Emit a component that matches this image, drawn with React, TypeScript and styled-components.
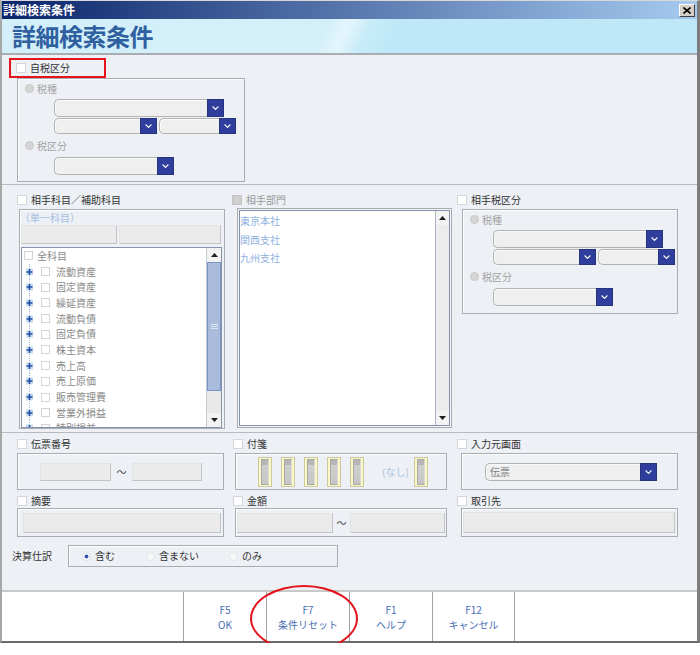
import React from 'react';
import styled, { createGlobalStyle } from 'styled-components';

const GlobalStyle = createGlobalStyle`
  * { box-sizing: border-box; }
  html, body { margin: 0; padding: 0; background: #ffffff; }
  body {
    font-family: "Noto Sans CJK JP", "Noto Sans", sans-serif;
    font-size: 10px;
    line-height: 1.2;
    color: #333333;
  }
`;

const Window = styled.div`
  position: relative;
  width: 700px;
  height: 643px;
  display: flex;
  flex-direction: column;
  border-top: 1px solid #d8d8d8;
  border-left: 2px solid #a7a7a7;
  border-right: 3px solid #7d7d7d;
  border-bottom: 2px solid #6b6b6b;
  background: #edf0f5;
`;

const TitleBar = styled.div`
  height: 18px;
  flex: none;
  display: flex;
  align-items: center;
  justify-content: space-between;
  padding: 0 2px 0 1px;
  background: linear-gradient(to right, #0a246a, #a6caf0);
  color: #ffffff;
  font-size: 12px;
  font-weight: 700;
`;

const CloseButton = styled.div`
  width: 16px;
  height: 13px;
  background: #d4d0c8;
  border: 1px solid;
  border-color: #ffffff #404040 #404040 #ffffff;
  display: flex;
  align-items: center;
  justify-content: center;
`;

const Header = styled.div`
  height: 36px;
  flex: none;
  display: flex;
  align-items: center;
  padding-left: 10px;
  background: linear-gradient(118deg, #d3effa 0%, #d3effa 46%, #e4f6fc 49%, #c9ecf9 52%, #bee8f7 56%, #bee8f7 100%);
  border-bottom: 2px solid #a9adb2;
`;

const HeaderTitle = styled.h1`
  margin: 0;
  font-size: 24px;
  font-weight: 700;
  color: #2f60a0;
  line-height: 1;
  letter-spacing: -0.5px;
`;

const Body = styled.div`
  flex: 1;
  display: flex;
  flex-direction: column;
  min-height: 0;
`;

const TopSection = styled.section`
  height: 130px;
  flex: none;
  padding: 3px 0 0 7px;
  display: flex;
  flex-direction: column;
  align-items: flex-start;
  border-bottom: 1px solid #b5b9c0;
`;

const Highlight = styled.div`
  width: 97px;
  height: 20px;
  border: 2px solid #e3141b;
  padding-left: 5px;
  display: flex;
  align-items: center;
`;

const CheckLabel = styled.label<{ $muted?: boolean; $ml?: number }>`
  display: flex;
  align-items: center;
  gap: 4px;
  height: 12px;
  margin-left: ${p => p.$ml ?? 0}px;
  color: ${p => (p.$muted ? '#9a9a9a' : '#333333')};
  white-space: nowrap;
`;

const CheckBox = styled.span<{ $disabled?: boolean; $size?: number }>`
  width: ${p => p.$size ?? 10}px;
  height: ${p => p.$size ?? 10}px;
  flex: none;
  background: ${p => (p.$disabled ? '#cfcfcf' : '#ffffff')};
  border: 1px solid ${p => (p.$disabled ? '#c4c4c4' : '#d3d6db')};
`;

const GroupBox = styled.div<{ $ml?: number; $mt?: number; $w: number; $h: number; $pl?: number }>`
  margin-left: ${p => p.$ml ?? 0}px;
  margin-top: ${p => p.$mt ?? 0}px;
  width: ${p => p.$w}px;
  height: ${p => p.$h}px;
  padding-left: ${p => p.$pl ?? 0}px;
  flex: none;
  border: 1px solid #a8acb3;
  box-shadow: inset 1px 1px 0 #fdfdfd;
`;

const TaxBox = styled(GroupBox)`
  padding-top: 4px;
  display: flex;
  flex-direction: column;
  align-items: flex-start;
`;

const RadioLabel = styled.div<{ $mt?: number }>`
  display: flex;
  align-items: center;
  gap: 3px;
  height: 11px;
  margin-top: ${p => p.$mt ?? 0}px;
  color: #a4a4a4;
`;

const Radio = styled.span<{ $state: 'disabled' | 'on' | 'off' }>`
  width: 9px;
  height: 9px;
  flex: none;
  border-radius: 50%;
  border: 1px solid
    ${p => (p.$state === 'disabled' ? '#c9c9c9' : p.$state === 'on' ? '#dcdfe6' : '#e1e3e7')};
  background: ${p =>
    p.$state === 'disabled'
      ? '#d5d5d5'
      : p.$state === 'on'
      ? 'radial-gradient(circle, #3453ad 0 1.7px, #ffffff 2.3px)'
      : '#f7f7f7'};
`;

const Indent = styled.div<{ $indent: number; $mt: number }>`
  margin-left: ${p => p.$indent}px;
  margin-top: ${p => p.$mt}px;
  display: flex;
  flex-direction: column;
  gap: 1px;
`;

const ComboRow = styled.div`
  display: flex;
  gap: 2px;
`;

const ComboWrap = styled.div<{ $w: number; $h: number }>`
  display: flex;
  width: ${p => p.$w}px;
  height: ${p => p.$h}px;
  flex: none;
`;

const ComboField = styled.div`
  flex: 1;
  display: flex;
  align-items: center;
  padding-left: 4px;
  background: #efefef;
  border: 1px solid #b3b3b3;
  border-right: none;
  border-radius: 5px 0 0 5px;
  box-shadow: inset 1px 1px 0 #fafafa;
  color: #7c7c7c;
`;

const ComboButton = styled.div`
  width: 17px;
  flex: none;
  display: flex;
  align-items: center;
  justify-content: center;
  background: #2f3d9c;
  border: 1px solid #27337f;
`;

const MiddleSection = styled.section`
  height: 248px;
  flex: none;
  padding: 9px 0 0 15px;
  display: grid;
  grid-template-columns: 210px 220px 223px;
  column-gap: 5px;
  align-items: start;
  border-bottom: 1px solid #b5b9c0;
`;

const Column = styled.div`
  display: flex;
  flex-direction: column;
  align-items: flex-start;
`;

const AccountBox = styled(GroupBox)`
  display: flex;
  flex-direction: column;
  align-items: flex-start;
  padding-left: 1px;
`;

const Placeholder = styled.div`
  height: 15px;
  display: flex;
  align-items: center;
  color: #a6bde3;
  margin-left: -1px;
`;

const PanelRow = styled.div`
  display: flex;
  gap: 2px;
  height: 19px;
`;

const TextPanel = styled.div<{ $w: number; $h?: number }>`
  width: ${p => p.$w}px;
  height: ${p => (p.$h ? `${p.$h}px` : '100%')};
  flex: none;
  background: #ebebeb;
  border: 1px solid #e3e3e3;
  border-right-color: #c3c3c3;
  border-bottom-color: #c3c3c3;
`;

const TreeBox = styled.div`
  margin-top: 3px;
  flex: 1;
  min-height: 0;
  align-self: stretch;
  margin-right: 2px;
  display: flex;
  background: #ffffff;
  border: 1px solid #8593ab;
  overflow: hidden;
`;

const TreeList = styled.div`
  flex: 1;
  padding-left: 2px;
  overflow: hidden;
`;

const TreeRow = styled.div`
  height: 15.7px;
  display: flex;
  align-items: center;
  color: #8a8a8a;
  white-space: nowrap;
`;

const RowCheck = styled(CheckBox)`
  border-color: #d4d4d4;
`;

const ItemCheck = styled(RowCheck)`
  margin: 0 6px 0 3px;
`;

const VScroll = styled.div`
  width: 15px;
  flex: none;
  display: flex;
  flex-direction: column;
  background: #e9e9e9;
  border-left: 1px solid #c5cad3;
`;

const ScrollBtn = styled.div`
  height: 14px;
  flex: none;
  display: flex;
  align-items: center;
  justify-content: center;
  background: #f3f3f3;
`;

const Thumb = styled.div<{ $h: number }>`
  height: ${p => p.$h}px;
  flex: none;
  display: flex;
  align-items: center;
  justify-content: center;
  background: #a9bcdc;
  border: 1px solid #7694c4;
`;

const Track = styled.div`
  flex: 1;
`;

const ListOuter = styled.div`
  margin: 2px 0 0 5px;
  width: 215px;
  height: 220px;
  padding: 1px;
  border: 1px solid #a9a9a9;
  background: #f7f7f7;
`;

const ListInner = styled.div`
  height: 100%;
  display: flex;
  background: #ffffff;
  border: 1px solid #7f90aa;
`;

const ListItems = styled.div`
  flex: 1;
  padding: 1px 0 0 0;
`;

const ListItem = styled.div`
  height: 18.5px;
  display: flex;
  align-items: center;
  color: #8eb0de;
`;

const ListScroll = styled(VScroll)`
  width: 14px;
  background: #ececec;
  border-left: 1px solid #a9b4c4;
  justify-content: space-between;
`;

const BottomSection = styled.section`
  flex: 1;
  padding: 5px 0 0 10px;
  display: flex;
  flex-direction: column;
`;

const FieldGrid = styled.div`
  padding-left: 5px;
  display: grid;
  grid-template-columns: 210px 220px 223px;
  column-gap: 5px;
  row-gap: 5px;
`;

const Field = styled.div`
  display: flex;
  flex-direction: column;
  align-items: flex-start;
`;

const FieldBox = styled(GroupBox)`
  display: flex;
  align-items: center;
`;

const Tilde = styled.span<{ $w: number }>`
  width: ${p => p.$w}px;
  flex: none;
  text-align: center;
  color: #444444;
`;

const Tag = styled.div<{ $ml?: number }>`
  width: 14px;
  height: 30px;
  flex: none;
  margin-left: ${p => p.$ml ?? 0}px;
  padding: 1px 2px;
  background: #fbf8c4;
  border: 1px solid #cdc8a6;
`;

const TagInner = styled.div`
  height: 100%;
  background: linear-gradient(to bottom, #b6b6b6 0, #b6b6b6 22%, #cfcfcf 22%, #c5c5c5 100%);
  border: 1px solid #a9a9a9;
  border-right-color: #dadada;
`;

const NoneText = styled.span`
  margin-left: 18px;
  color: #aac0e0;
`;

const SettleRow = styled.div`
  margin-top: 8px;
  height: 22px;
  display: flex;
  align-items: center;
`;

const SettleLabel = styled.span`
  width: 56px;
  flex: none;
  color: #333333;
`;

const SettleBox = styled(GroupBox)`
  display: flex;
  align-items: center;
`;

const RadioOption = styled.div<{ $w?: number }>`
  width: ${p => (p.$w ? `${p.$w}px` : 'auto')};
  flex: none;
  display: flex;
  align-items: center;
  gap: 4px;
  color: #333333;
`;

const Footer = styled.footer`
  height: 51px;
  flex: none;
  display: flex;
  padding-left: 181px;
  background: #ffffff;
  border-top: 2px solid #c9c9c9;
`;

const FKey = styled.div`
  width: 83px;
  display: flex;
  flex-direction: column;
  align-items: center;
  justify-content: center;
  border-left: 1px solid #a3a3a3;
  color: #4a6db5;
  line-height: 15px;
  &:last-child {
    border-right: 1px solid #a3a3a3;
  }
`;

const RedEllipse = styled.div`
  position: absolute;
  left: 248px;
  top: 584px;
  width: 108px;
  height: 67px;
  border: 2px solid #e3141b;
  border-radius: 50%;
  pointer-events: none;
`;

const Chevron = () => (
  <svg width="7" height="4" viewBox="0 0 7 4">
    <polyline points="0.6,0.5 3.5,3.4 6.4,0.5" fill="none" stroke="#ffffff" strokeWidth="1.1" />
  </svg>
);

const Arrow = ({ up }: { up?: boolean }) => (
  <svg width="7" height="4" viewBox="0 0 7 4">
    <polygon points={up ? '0,4 3.5,0 7,4' : '0,0 7,0 3.5,4'} fill="#1e1e1e" />
  </svg>
);

const Grip = () => (
  <svg width="7" height="5" viewBox="0 0 7 5">
    <path d="M0 0.5h7M0 2.5h7M0 4.5h7" stroke="#dfe7f4" strokeWidth="1" />
  </svg>
);

const CloseIcon = () => (
  <svg width="8" height="7" viewBox="0 0 8 7">
    <path d="M0.5 0.5L7.5 6.5M7.5 0.5L0.5 6.5" stroke="#000000" strokeWidth="1.6" />
  </svg>
);

const Expander = () => (
  <svg width="14" height="16" viewBox="0 0 14 16" style={{ flex: 'none' }}>
    <line x1="5.5" y1="0" x2="5.5" y2="16" stroke="#9dbbe3" strokeWidth="1" strokeDasharray="1 1" />
    <rect x="2" y="4.5" width="7" height="7" fill="#c9dbf1" />
    <path d="M2.5 8h6M5.5 5v6" stroke="#1f4fa3" strokeWidth="1.6" />
  </svg>
);

const Combo = ({ w, h, text }: { w: number; h: number; text?: string }) => (
  <ComboWrap $w={w} $h={h}>
    <ComboField>{text}</ComboField>
    <ComboButton>
      <Chevron />
    </ComboButton>
  </ComboWrap>
);

const TaxGroup = ({ ml, mt, w, h, indent }: { ml: number; mt: number; w: number; h: number; indent: number }) => (
  <TaxBox $ml={ml} $mt={mt} $w={w} $h={h} $pl={7}>
    <RadioLabel>
      <Radio $state="disabled" />
      税種
    </RadioLabel>
    <Indent $indent={indent} $mt={5}>
      <Combo w={170} h={18} />
      <ComboRow>
        <Combo w={103} h={16} />
        <Combo w={77} h={16} />
      </ComboRow>
    </Indent>
    <RadioLabel $mt={6}>
      <Radio $state="disabled" />
      税区分
    </RadioLabel>
    <Indent $indent={indent} $mt={6}>
      <Combo w={120} h={18} />
    </Indent>
  </TaxBox>
);

const accounts = ['流動資産', '固定資産', '繰延資産', '流動負債', '固定負債', '株主資本', '売上高', '売上原価', '販売管理費', '営業外損益', '特別損益'];
const departments = ['東京本社', '関西支社', '九州支社'];
const fkeys = [
  ['F5', 'OK'],
  ['F7', '条件リセット'],
  ['F1', 'ヘルプ'],
  ['F12', 'キャンセル'],
];

const App: React.FC = () => (
  <>
    <GlobalStyle />
    <Window>
      <TitleBar>
        <span>詳細検索条件</span>
        <CloseButton>
          <CloseIcon />
        </CloseButton>
      </TitleBar>
      <Header>
        <HeaderTitle>詳細検索条件</HeaderTitle>
      </Header>
      <Body>
        <TopSection>
          <Highlight>
            <CheckLabel>
              <CheckBox />
              自税区分
            </CheckLabel>
          </Highlight>
          <TaxGroup ml={8} mt={0} w={228} h={104} indent={29} />
        </TopSection>

        <MiddleSection>
          <Column>
            <CheckLabel>
              <CheckBox />
              相手科目／補助科目
            </CheckLabel>
            <AccountBox $ml={2} $mt={3} $w={206} $h={220}>
              <Placeholder>（単一科目）</Placeholder>
              <PanelRow>
                <TextPanel $w={96} />
                <TextPanel $w={102} />
              </PanelRow>
              <TreeBox>
                <TreeList>
                  <TreeRow>
                    <RowCheck $size={9} />
                    <span style={{ marginLeft: 4 }}>全科目</span>
                  </TreeRow>
                  {accounts.map(a => (
                    <TreeRow key={a}>
                      <Expander />
                      <ItemCheck $size={9} />
                      {a}
                    </TreeRow>
                  ))}
                </TreeList>
                <VScroll>
                  <ScrollBtn>
                    <Arrow up />
                  </ScrollBtn>
                  <Thumb $h={129}>
                    <Grip />
                  </Thumb>
                  <Track />
                  <ScrollBtn>
                    <Arrow />
                  </ScrollBtn>
                </VScroll>
              </TreeBox>
            </AccountBox>
          </Column>

          <Column>
            <CheckLabel $muted>
              <CheckBox $disabled />
              相手部門
            </CheckLabel>
            <ListOuter>
              <ListInner>
                <ListItems>
                  {departments.map(d => (
                    <ListItem key={d}>{d}</ListItem>
                  ))}
                </ListItems>
                <ListScroll>
                  <ScrollBtn>
                    <Arrow up />
                  </ScrollBtn>
                  <ScrollBtn>
                    <Arrow />
                  </ScrollBtn>
                </ListScroll>
              </ListInner>
            </ListOuter>
          </Column>

          <Column>
            <CheckLabel>
              <CheckBox />
              相手税区分
            </CheckLabel>
            <TaxGroup ml={5} mt={3} w={216} h={105} indent={23} />
          </Column>
        </MiddleSection>

        <BottomSection>
          <FieldGrid>
            <Field>
              <CheckLabel>
                <CheckBox />
                伝票番号
              </CheckLabel>
              <FieldBox $mt={3} $w={207} $h={37} $pl={22}>
                <TextPanel $w={71} $h={18} />
                <Tilde $w={21}>～</Tilde>
                <TextPanel $w={70} $h={18} />
              </FieldBox>
            </Field>
            <Field>
              <CheckLabel $ml={1}>
                <CheckBox />
                付箋
              </CheckLabel>
              <FieldBox $ml={3} $mt={3} $w={212} $h={37} $pl={22}>
                {[0, 1, 2, 3, 4].map(i => (
                  <Tag key={i} $ml={i === 0 ? 0 : 9}>
                    <TagInner />
                  </Tag>
                ))}
                <NoneText>(なし)</NoneText>
                <Tag $ml={5}>
                  <TagInner />
                </Tag>
              </FieldBox>
            </Field>
            <Field>
              <CheckLabel>
                <CheckBox />
                入力元画面
              </CheckLabel>
              <FieldBox $ml={4} $mt={3} $w={217} $h={37} $pl={23}>
                <Combo w={172} h={18} text="伝票" />
              </FieldBox>
            </Field>

            <Field>
              <CheckLabel>
                <CheckBox />
                摘要
              </CheckLabel>
              <FieldBox $mt={1} $w={207} $h={29} $pl={5}>
                <TextPanel $w={198} $h={20} />
              </FieldBox>
            </Field>
            <Field>
              <CheckLabel $ml={1}>
                <CheckBox />
                金額
              </CheckLabel>
              <FieldBox $ml={3} $mt={1} $w={212} $h={29} $pl={1}>
                <TextPanel $w={96} $h={20} />
                <Tilde $w={17}>～</Tilde>
                <TextPanel $w={95} $h={20} />
              </FieldBox>
            </Field>
            <Field>
              <CheckLabel>
                <CheckBox />
                取引先
              </CheckLabel>
              <FieldBox $ml={4} $mt={1} $w={217} $h={29} $pl={1}>
                <TextPanel $w={212} $h={21} />
              </FieldBox>
            </Field>
          </FieldGrid>

          <SettleRow>
            <SettleLabel>決算仕訳</SettleLabel>
            <SettleBox $w={270} $h={22} $pl={13}>
              <RadioOption $w={64}>
                <Radio $state="on" />
                含む
              </RadioOption>
              <RadioOption $w={83}>
                <Radio $state="off" />
                含まない
              </RadioOption>
              <RadioOption>
                <Radio $state="off" />
                のみ
              </RadioOption>
            </SettleBox>
          </SettleRow>
        </BottomSection>
      </Body>

      <Footer>
        {fkeys.map(([k, label]) => (
          <FKey key={k}>
            <span>{k}</span>
            <span>{label}</span>
          </FKey>
        ))}
      </Footer>
      <RedEllipse />
    </Window>
  </>
);

export default App;
